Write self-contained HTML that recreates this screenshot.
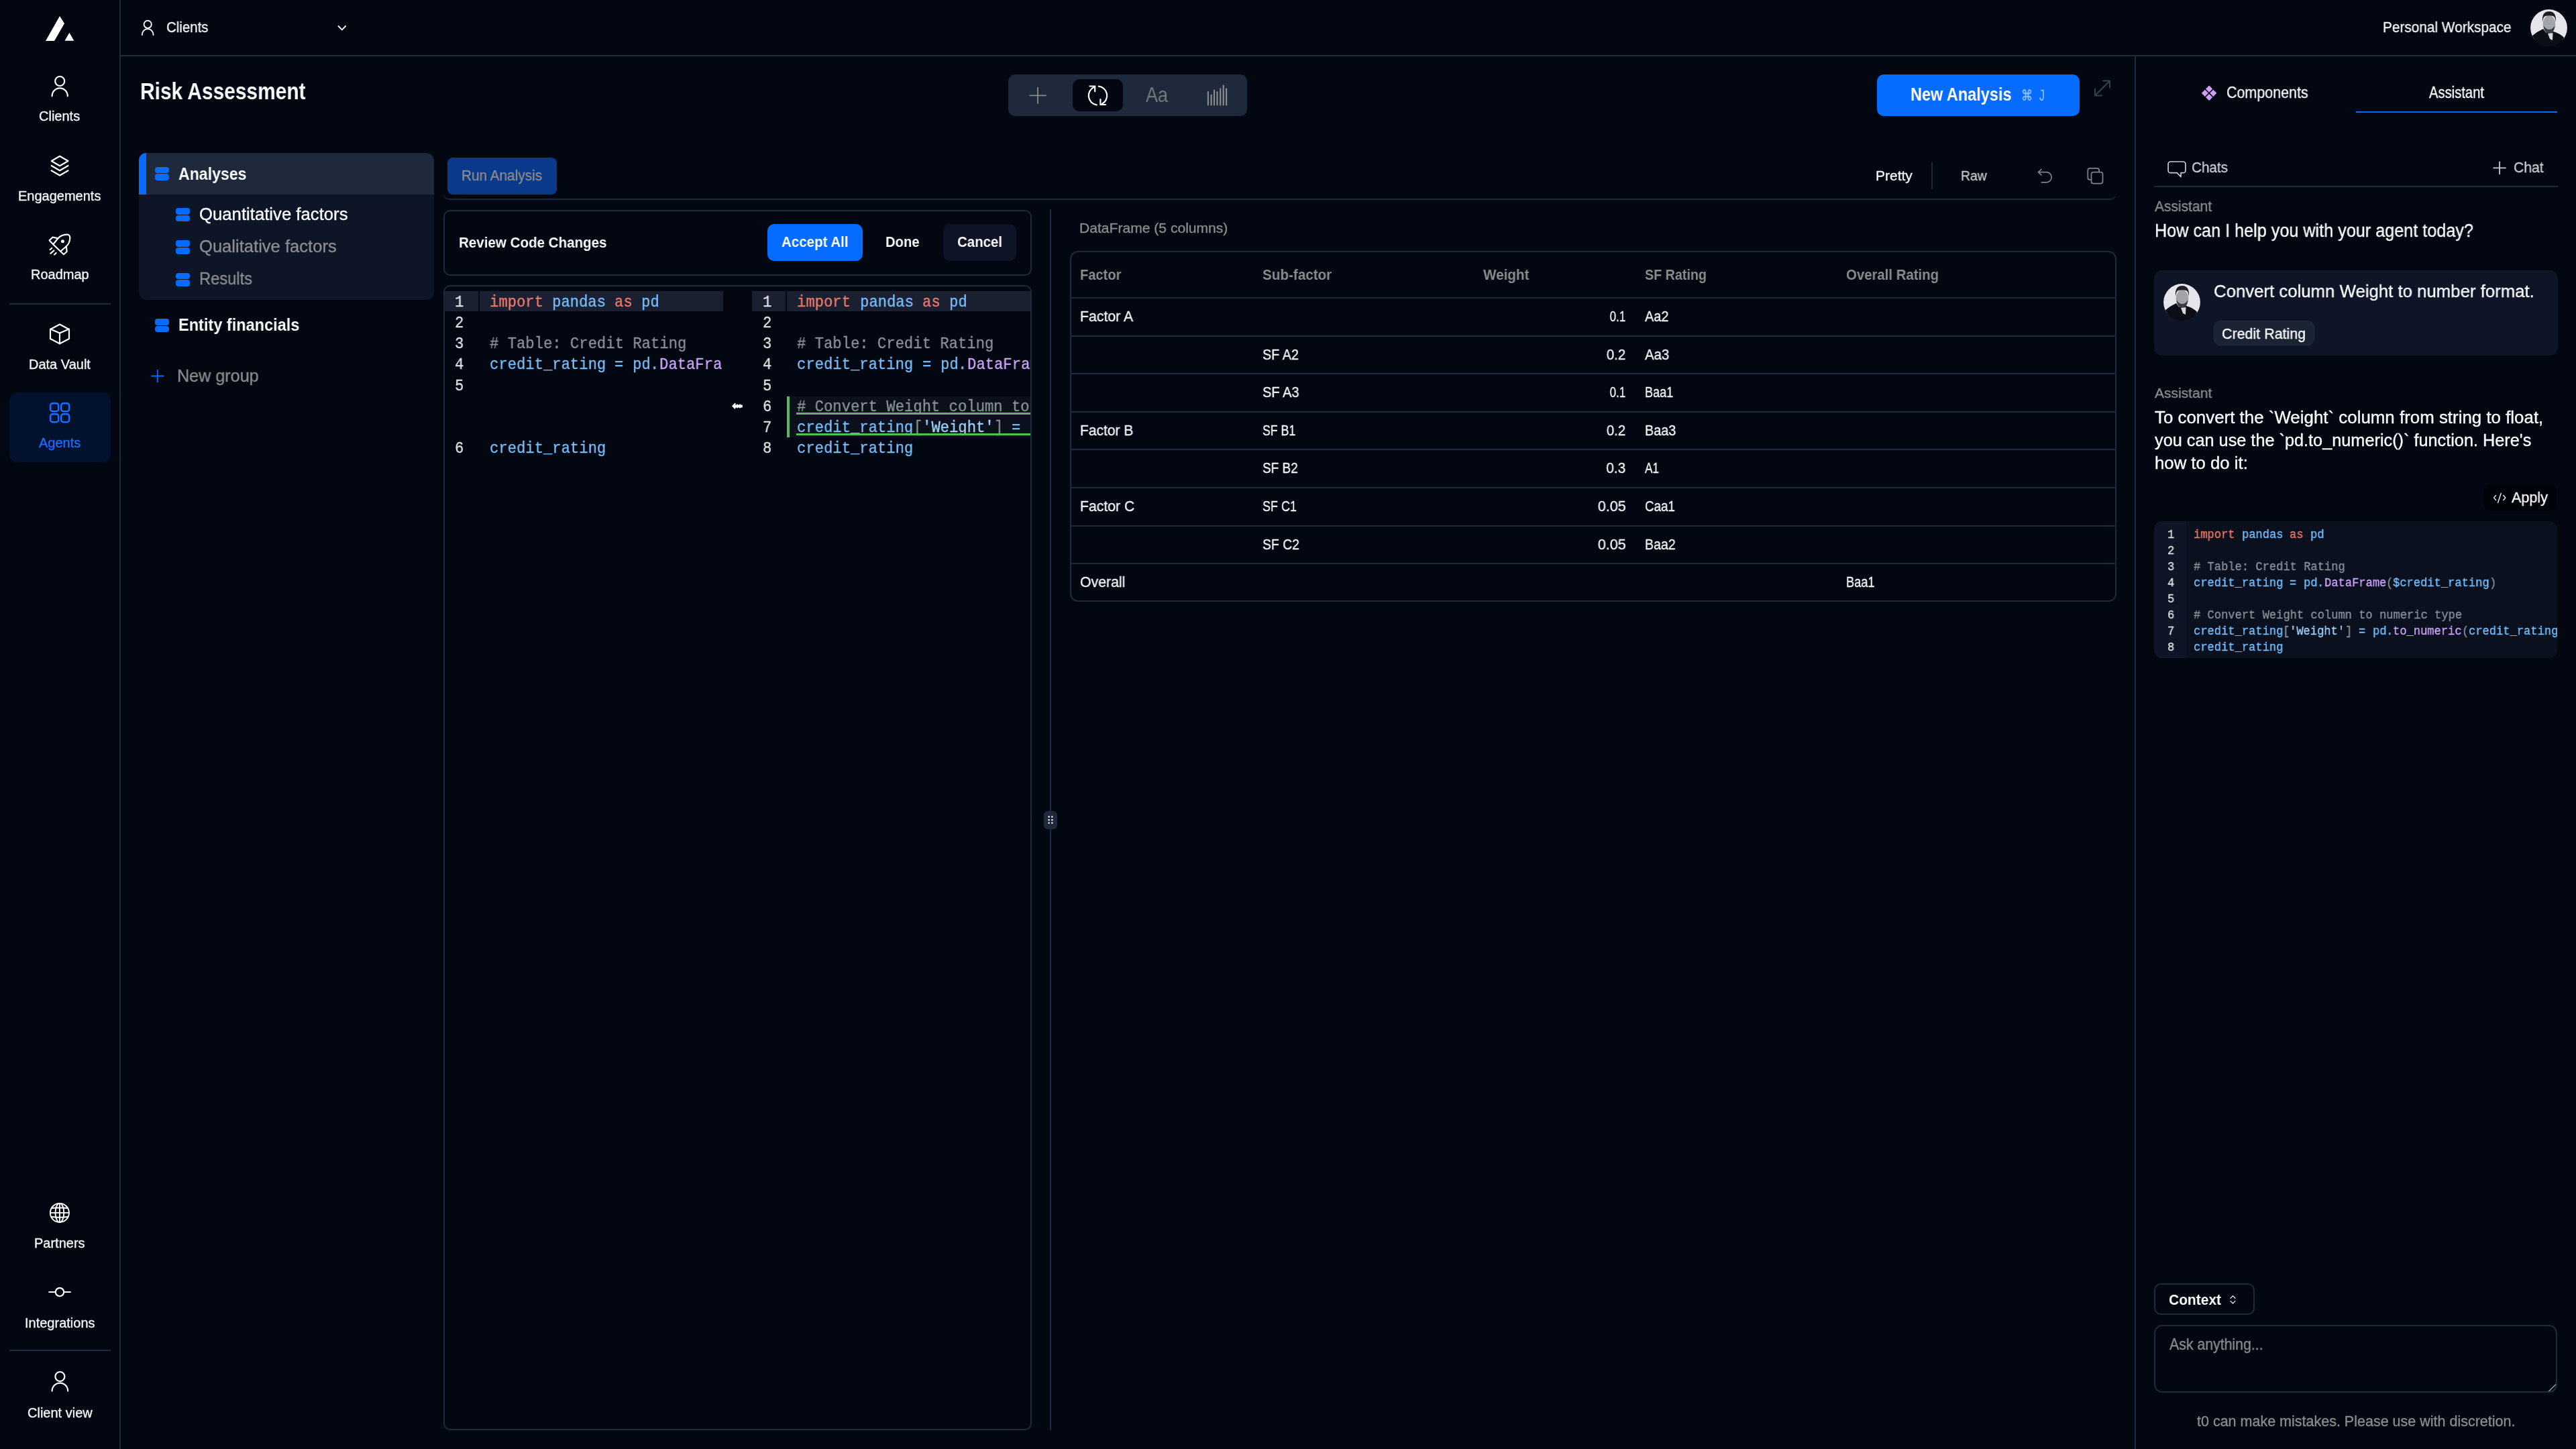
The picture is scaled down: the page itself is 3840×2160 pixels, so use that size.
<!DOCTYPE html>
<html><head><meta charset="utf-8">
<style>
*{box-sizing:border-box;margin:0;padding:0}
html,body{width:3840px;height:2160px;overflow:hidden;background:#030712;font-family:"Liberation Sans",sans-serif;color:#f3f4f6}
.a{position:absolute;white-space:pre;-webkit-font-smoothing:antialiased;will-change:transform}
svg{position:absolute;overflow:visible}
</style></head>
<body>
<div style="position:absolute;left:178px;top:0px;width:2px;height:2160px;background:#1e293b"></div>
<svg style="left:68px;top:24px" width="42" height="37" viewBox="0 0 42 37"><path d="M21 0 L28 11 L13 37 L0 37 Z" fill="#fff"/><path d="M35.4 24.8 L42.3 36.7 L28.5 36.7 Z" fill="#fff"/></svg>
<svg style="left:0;top:0" width="180" height="2160"><g fill="none" stroke="#fff" stroke-width="2.15" stroke-linecap="round" stroke-linejoin="round"><circle cx="89.2" cy="121" r="7"/><path d="M77.6 143.3 A11.6 12 0 0 1 100.8 143.3"/><path d="M89.1 232.8 L101.5 240 L89.1 247.2 L76.7 240 Z"/><path d="M76.7 247 L89.1 254.3 L101.5 247"/><path d="M76.7 254.3 L89.1 261.5 L101.5 254.3"/><path d="M86.5 355.2 C90 351.5 95.5 349.6 101.2 349.7 Q104.4 350.6 104.3 355 C104 360.8 101.6 364.8 98.8 367.2 L90.2 374.8 L79.2 364.2 Z"/><path d="M86.5 355.2 L78.6 353.6 L73.6 358.2 L79.2 364.2"/><path d="M98.8 367.2 L99.7 375 L95 379.2 L90.2 374.8"/><path d="M74.6 372.2 L77.3 369.8"/><path d="M75.4 377.9 L80.3 373.5"/><path d="M81 379.5 L83.6 377.1"/><circle cx="93.4" cy="359.8" r="2.5" fill="#fff" stroke="none"/><path d="M89 483.5 L103 491 L103 505 L89 512.3 L75 505 L75 491 Z"/><path d="M75 490.5 L89 496.5 L103 490.5"/><path d="M89 496.5 L89 512.3"/><g stroke-width="1.9"><circle cx="88.9" cy="1807.9" r="14"/><ellipse cx="88.9" cy="1807.9" rx="6.4" ry="14"/><path d="M88.9 1793.9 V1821.9 M74.9 1807.9 H102.9 M77 1801 Q88.9 1799.5 100.8 1801 M77.5 1814 Q88.9 1815.5 100.3 1814"/></g><circle cx="89" cy="1926" r="6.2"/><path d="M73.2 1926 H82.8"/><path d="M95.2 1926 H104.8"/><circle cx="89.4" cy="2052" r="7"/><path d="M77.6 2073.6 A11.8 12 0 0 1 101.2 2073.6"/></g></svg>
<div style="position:absolute;left:14px;top:451.5px;width:151px;height:2px;background:#1e293b"></div>
<div style="position:absolute;left:14px;top:2012px;width:151px;height:2px;background:#1e293b"></div>
<div style="position:absolute;left:14px;top:585px;width:151px;height:104px;background:#02112d;border-radius:12px;"></div>
<svg style="left:0;top:0" width="180" height="700"><g fill="none" stroke="#1a6dff" stroke-width="2.4"><rect x="75.2" y="601.2" width="12" height="12" rx="3.2"/><rect x="91.2" y="601.2" width="12" height="12" rx="3.2"/><rect x="75.2" y="617.2" width="12" height="12" rx="3.2"/><rect x="91.2" y="617.2" width="12" height="12" rx="3.2"/></g></svg>
<div class="a" style="left:58.43px;top:163.07px;font-size:20.00px;line-height:20.00px;font-weight:400;color:#f3f4f6;-webkit-text-stroke:0.35px #f3f4f6;">Clients</div>
<div class="a" style="left:27.29px;top:282.07px;font-size:20.00px;line-height:20.00px;font-weight:400;color:#f3f4f6;-webkit-text-stroke:0.35px #f3f4f6;">Engagements</div>
<div class="a" style="left:45.64px;top:399.07px;font-size:20.00px;line-height:20.00px;font-weight:400;color:#f3f4f6;-webkit-text-stroke:0.35px #f3f4f6;">Roadmap</div>
<div class="a" style="left:43.05px;top:532.57px;font-size:20.00px;line-height:20.00px;font-weight:400;color:#f3f4f6;-webkit-text-stroke:0.35px #f3f4f6;">Data Vault</div>
<div class="a" style="left:51.20px;top:1843.07px;font-size:20.00px;line-height:20.00px;font-weight:400;color:#f3f4f6;-webkit-text-stroke:0.35px #f3f4f6;">Partners</div>
<div class="a" style="left:36.74px;top:1962.07px;font-size:20.00px;line-height:20.00px;font-weight:400;color:#f3f4f6;-webkit-text-stroke:0.35px #f3f4f6;">Integrations</div>
<div class="a" style="left:40.65px;top:2096.07px;font-size:20.00px;line-height:20.00px;font-weight:400;color:#f3f4f6;-webkit-text-stroke:0.35px #f3f4f6;">Client view</div>
<div class="a" style="left:57.87px;top:650.07px;font-size:20.00px;line-height:20.00px;font-weight:400;color:#1a6dff;-webkit-text-stroke:0.35px #1a6dff;">Agents</div>
<div style="position:absolute;left:180px;top:82px;width:3660px;height:2px;background:#1e293b"></div>
<svg style="left:0;top:0" width="600" height="80"><g fill="none" stroke="#f3f4f6" stroke-width="1.9" stroke-linecap="round"><circle cx="220.2" cy="36.3" r="5.6"/><path d="M211.8 52 A8.4 9 0 0 1 228.6 52"/><path d="M504.5 39 L509.8 44.5 L515.1 39"/></g></svg>
<div class="a" style="left:247.70px;top:30.27px;font-size:22.24px;line-height:22.24px;font-weight:400;color:#f3f4f6;-webkit-text-stroke:0.35px #f3f4f6;transform:scaleX(0.9195);transform-origin:left center;">Clients</div>
<div class="a" style="left:3551.60px;top:29.92px;font-size:22.53px;line-height:22.53px;font-weight:400;color:#f3f4f6;-webkit-text-stroke:0.35px #f3f4f6;transform:scaleX(0.9241);transform-origin:left center;">Personal Workspace</div>
<svg style="left:3771.6px;top:13.5px" width="55" height="55" viewBox="0 0 55 55"><defs><clipPath id="av"><circle cx="27.5" cy="27.5" r="27.4"/></clipPath></defs><linearGradient id="gav" x1="0" y1="0" x2="0" y2="1"><stop offset="0.8" stop-color="#e6e6ea"/><stop offset="0.84" stop-color="#0b0e16"/></linearGradient><g clip-path="url(#av)"><rect width="55" height="55" fill="url(#gav)"/><path d="M0 42 L2 40 Q10 33 19 29 L23 34.5 L34 33 Q42 35 48 40 L53 45 L55 55 L0 55 Z" fill="#0b0e16"/><ellipse cx="28" cy="22" rx="9.3" ry="13" fill="#a3a4aa"/><path d="M19.5 24 Q20 35 28 36 Q36 35 36.5 24 Q33 30 28 30 Q23 30 19.5 24 Z" fill="#3b3d44"/><path d="M18 19 Q16.5 3 28 3 Q39 3 38 19 Q37 11 34 10 Q28 8.5 22 10 Q19 11 18 19 Z" fill="#1d1f26"/><path d="M26 36 L33.5 35 L33 46 L29 44 Z" fill="#d8d8dc"/></g></svg>
<div class="a" style="left:208.50px;top:119.46px;font-size:34.88px;line-height:34.88px;font-weight:700;color:#f9fafb;transform:scaleX(0.8572);transform-origin:left center;">Risk Assessment</div>
<div style="position:absolute;left:1502.5px;top:111.3px;width:356.5px;height:61.7px;background:#1e293b;border-radius:10px;"></div>
<div style="position:absolute;left:1599px;top:118px;width:75px;height:48px;background:#030712;border-radius:10px;"></div>
<svg style="left:0;top:0" width="1900" height="200"><g fill="none" stroke-linecap="round" stroke-linejoin="round"><path d="M1547 130.5 V154 M1535.3 142.3 H1559" stroke="#8b8b8b" stroke-width="1.8"/><path d="M1631 129.8 A14 14 0 0 0 1634.8 156.4" stroke="#fff" stroke-width="2.2"/><path d="M1637.8 128.6 A14 14 0 0 1 1642.9 154.8" stroke="#fff" stroke-width="2.2"/><path d="M1624.5 128.5 H1632.2 V136.3" stroke="#fff" stroke-width="2.2"/><path d="M1640.4 148.2 V156 H1648" stroke="#fff" stroke-width="2.2"/><path d="M1800.9 137 V156.5 M1805.6 141.6 V156.5 M1810 134.7 V156.5 M1814.5 137 V156.5 M1819.2 132.3 V156.5 M1823.7 127.7 V156.5 M1828.1 132.3 V156.5" stroke="#8b8b8b" stroke-width="2.2"/></g></svg>
<div class="a" style="left:1708.00px;top:126.46px;font-size:30.52px;line-height:30.52px;font-weight:400;color:#74777c;-webkit-text-stroke:0.35px #74777c;transform:scaleX(0.8841);transform-origin:left center;-webkit-text-stroke:0;">Aa</div>
<div style="position:absolute;left:2797.5px;top:111.3px;width:302px;height:61.7px;background:#066cff;border-radius:10px;"></div>
<div class="a" style="left:2847.50px;top:128.41px;font-size:27.03px;line-height:27.03px;font-weight:700;color:#ffffff;transform:scaleX(0.8690);transform-origin:left center;">New Analysis</div>
<div class="a" style="left:3013.00px;top:132.37px;font-size:22.00px;line-height:22.00px;font-weight:400;color:#8ec1ff;-webkit-text-stroke:0.35px #8ec1ff;transform:scaleX(0.7727);transform-origin:left center;">⌘</div>
<div class="a" style="left:3038.50px;top:132.39px;font-size:24.29px;line-height:24.29px;font-weight:400;color:#8ec1ff;font-family:'Liberation Mono',monospace;-webkit-text-stroke:0.3px #8ec1ff;transform:scaleX(0.6517);transform-origin:left center;">J</div>
<svg style="left:0;top:0" width="3200" height="200"><g fill="none" stroke="#374151" stroke-width="2" stroke-linecap="round" stroke-linejoin="round"><path d="M3123 142.5 L3145 120.5 M3135 120.5 H3145 V130.5 M3123 132.5 V142.5 H3133"/></g></svg>
<div style="position:absolute;left:207px;top:228px;width:439.5px;height:218.5px;background:#0e1527;border-radius:12px;"></div>
<div style="position:absolute;left:207px;top:228px;width:439.5px;height:61.6px;background:#1e293b;border-radius:12px 12px 0 0;"></div>
<div style="position:absolute;left:207px;top:228px;width:11px;height:61.6px;background:#066cff;border-radius:12px 0 0 0;"></div>
<div style="position:absolute;left:231.2px;top:248.6px;width:21px;height:9.6px;background:#066cff;border-radius:4px"></div><div style="position:absolute;left:231.2px;top:259.4px;width:21px;height:9.6px;background:#066cff;border-radius:4px"></div>
<div class="a" style="left:266.40px;top:245.75px;font-size:26.16px;line-height:26.16px;font-weight:700;color:#f9fafb;transform:scaleX(0.8836);transform-origin:left center;">Analyses</div>
<div style="position:absolute;left:262.1px;top:310px;width:21px;height:9.6px;background:#066cff;border-radius:4px"></div><div style="position:absolute;left:262.1px;top:320.8px;width:21px;height:9.6px;background:#066cff;border-radius:4px"></div>
<div class="a" style="left:297.30px;top:307.34px;font-size:25.58px;line-height:25.58px;font-weight:400;color:#f9fafb;-webkit-text-stroke:0.35px #f9fafb;transform:scaleX(1.0051);transform-origin:left center;">Quantitative factors</div>
<div style="position:absolute;left:262.1px;top:358.4px;width:21px;height:9.6px;background:#066cff;border-radius:4px"></div><div style="position:absolute;left:262.1px;top:369.2px;width:21px;height:9.6px;background:#066cff;border-radius:4px"></div>
<div class="a" style="left:297.30px;top:355.34px;font-size:25.58px;line-height:25.58px;font-weight:400;color:#8c8c8c;-webkit-text-stroke:0.35px #8c8c8c;">Qualitative factors</div>
<div style="position:absolute;left:262.1px;top:406.6px;width:21px;height:9.6px;background:#066cff;border-radius:4px"></div><div style="position:absolute;left:262.1px;top:417.40000000000003px;width:21px;height:9.6px;background:#066cff;border-radius:4px"></div>
<div class="a" style="left:297.30px;top:403.34px;font-size:25.58px;line-height:25.58px;font-weight:400;color:#8c8c8c;-webkit-text-stroke:0.35px #8c8c8c;transform:scaleX(0.9262);transform-origin:left center;">Results</div>
<div style="position:absolute;left:231.2px;top:475px;width:21px;height:9.6px;background:#066cff;border-radius:4px"></div><div style="position:absolute;left:231.2px;top:485.8px;width:21px;height:9.6px;background:#066cff;border-radius:4px"></div>
<div class="a" style="left:266.40px;top:471.82px;font-size:25.73px;line-height:25.73px;font-weight:700;color:#f9fafb;transform:scaleX(0.9146);transform-origin:left center;">Entity financials</div>
<svg style="left:0;top:0" width="300" height="600"><path d="M234.8 551 V570 M225.3 560.5 H244.3" stroke="#066cff" stroke-width="1.8" fill="none"/></svg>
<div class="a" style="left:263.60px;top:547.76px;font-size:25.44px;line-height:25.44px;font-weight:400;color:#8c8c8c;-webkit-text-stroke:0.35px #8c8c8c;transform:scaleX(0.9893);transform-origin:left center;">New group</div>
<div style="position:absolute;left:660px;top:220px;width:2495px;height:77.5px;border:none;border-bottom:2px solid #1e293b;border-radius:0 0 10px 10px;"></div>
<div style="position:absolute;left:667px;top:235px;width:163px;height:54.8px;background:#0a388b;border-radius:8px;"></div>
<div class="a" style="left:688.30px;top:250.92px;font-size:22.53px;line-height:22.53px;font-weight:400;color:#8c8c8c;-webkit-text-stroke:0.35px #8c8c8c;transform:scaleX(0.9219);transform-origin:left center;">Run Analysis</div>
<div class="a" style="left:2796.40px;top:252.47px;font-size:20.35px;line-height:20.35px;font-weight:400;color:#f3f4f6;-webkit-text-stroke:0.35px #f3f4f6;transform:scaleX(1.0312);transform-origin:left center;">Pretty</div>
<div style="position:absolute;left:2879.2px;top:242px;width:2px;height:40px;background:#1e293b"></div>
<div class="a" style="left:2923.00px;top:252.47px;font-size:20.35px;line-height:20.35px;font-weight:400;color:#c4c4c4;-webkit-text-stroke:0.35px #c4c4c4;transform:scaleX(0.9508);transform-origin:left center;">Raw</div>
<svg style="left:0;top:0" width="3200" height="300"><g fill="none" stroke="#80858c" stroke-width="1.7" stroke-linecap="round" stroke-linejoin="round"><path d="M3038.6 256.6 H3050.6 A7.6 7.6 0 0 1 3050.6 271.8 H3043.2"/><path d="M3043 252.4 L3038.6 256.6 L3043 261"/><rect x="3112.3" y="250.9" width="16.8" height="17" rx="3"/><rect x="3117.5" y="256.6" width="17" height="17" rx="3" fill="#030712"/></g></svg>
<div style="position:absolute;left:660.5px;top:312.5px;width:877px;height:98.5px;border:2px solid #1e293b;border-radius:10px;"></div>
<div class="a" style="left:683.50px;top:350.36px;font-size:22.97px;line-height:22.97px;font-weight:700;color:#f9fafb;transform:scaleX(0.8951);transform-origin:left center;">Review Code Changes</div>
<div style="position:absolute;left:1143.5px;top:334.2px;width:142.2px;height:54.6px;background:#066cff;border-radius:10px;"></div>
<div class="a" style="left:1164.60px;top:350.37px;font-size:22.24px;line-height:22.24px;font-weight:700;color:#ffffff;transform:scaleX(0.9221);transform-origin:left center;">Accept All</div>
<div class="a" style="left:1320.40px;top:350.37px;font-size:22.24px;line-height:22.24px;font-weight:700;color:#f9fafb;transform:scaleX(0.9084);transform-origin:left center;">Done</div>
<div style="position:absolute;left:1406px;top:334.2px;width:109px;height:54.6px;background:#0e1426;border-radius:10px;"></div>
<div class="a" style="left:1426.80px;top:350.37px;font-size:22.24px;line-height:22.24px;font-weight:700;color:#f9fafb;transform:scaleX(0.9188);transform-origin:left center;">Cancel</div>
<div style="position:absolute;left:1564.8px;top:312px;width:2px;height:1820px;background:#1e293b"></div>
<div style="position:absolute;left:1556px;top:1208.5px;width:20px;height:27.5px;background:#1e293b;border-radius:6px;"></div>
<svg style="left:0;top:0" width="1600" height="1300"><g fill="#fff"><circle cx="1563.6" cy="1217.6" r="1.25"/><circle cx="1568.3" cy="1217.6" r="1.25"/><circle cx="1563.6" cy="1222.2" r="1.25"/><circle cx="1568.3" cy="1222.2" r="1.25"/><circle cx="1563.6" cy="1226.8" r="1.25"/><circle cx="1568.3" cy="1226.8" r="1.25"/></g></svg>
<div style="position:absolute;left:660.5px;top:425px;width:877px;height:1707px;border:2px solid #1e293b;border-radius:10px;"></div>
<div style="position:absolute;left:662px;top:433.8px;width:51px;height:30.5px;background:#1b2030;"></div>
<div style="position:absolute;left:715px;top:433.8px;width:362.8px;height:30.5px;background:#1b2030;"></div>
<div style="position:absolute;left:1121.2px;top:433.8px;width:50.3px;height:30.5px;background:#1b2030;"></div>
<div style="position:absolute;left:1173.3px;top:433.8px;width:362.7px;height:30.5px;background:#1b2030;"></div>
<div style="position:absolute;left:1177px;top:590.5px;width:359px;height:61.3px;background:#0b101c;"></div>
<div style="position:absolute;left:1173.3px;top:590.5px;width:3.7px;height:61.3px;background:#5cb85c"></div>
<div class="a" style="left:678.00px;top:438.61px;font-size:24.00px;line-height:24.00px;font-weight:400;color:#e2e2e2;font-family:'Liberation Mono',monospace;-webkit-text-stroke:0.3px #e2e2e2;transform:scaleX(0.9253);transform-origin:left center;">1</div>
<div class="a" style="left:678.00px;top:469.86px;font-size:24.00px;line-height:24.00px;font-weight:400;color:#e2e2e2;font-family:'Liberation Mono',monospace;-webkit-text-stroke:0.3px #e2e2e2;transform:scaleX(0.9253);transform-origin:left center;">2</div>
<div class="a" style="left:678.00px;top:501.11px;font-size:24.00px;line-height:24.00px;font-weight:400;color:#e2e2e2;font-family:'Liberation Mono',monospace;-webkit-text-stroke:0.3px #e2e2e2;transform:scaleX(0.9253);transform-origin:left center;">3</div>
<div class="a" style="left:678.00px;top:532.36px;font-size:24.00px;line-height:24.00px;font-weight:400;color:#e2e2e2;font-family:'Liberation Mono',monospace;-webkit-text-stroke:0.3px #e2e2e2;transform:scaleX(0.9253);transform-origin:left center;">4</div>
<div class="a" style="left:678.00px;top:563.61px;font-size:24.00px;line-height:24.00px;font-weight:400;color:#e2e2e2;font-family:'Liberation Mono',monospace;-webkit-text-stroke:0.3px #e2e2e2;transform:scaleX(0.9253);transform-origin:left center;">5</div>
<div class="a" style="left:678.00px;top:657.36px;font-size:24.00px;line-height:24.00px;font-weight:400;color:#e2e2e2;font-family:'Liberation Mono',monospace;-webkit-text-stroke:0.3px #e2e2e2;transform:scaleX(0.9253);transform-origin:left center;">6</div>
<div class="a" style="left:1137.00px;top:438.61px;font-size:24.00px;line-height:24.00px;font-weight:400;color:#e2e2e2;font-family:'Liberation Mono',monospace;-webkit-text-stroke:0.3px #e2e2e2;transform:scaleX(0.9253);transform-origin:left center;">1</div>
<div class="a" style="left:1137.00px;top:469.86px;font-size:24.00px;line-height:24.00px;font-weight:400;color:#e2e2e2;font-family:'Liberation Mono',monospace;-webkit-text-stroke:0.3px #e2e2e2;transform:scaleX(0.9253);transform-origin:left center;">2</div>
<div class="a" style="left:1137.00px;top:501.11px;font-size:24.00px;line-height:24.00px;font-weight:400;color:#e2e2e2;font-family:'Liberation Mono',monospace;-webkit-text-stroke:0.3px #e2e2e2;transform:scaleX(0.9253);transform-origin:left center;">3</div>
<div class="a" style="left:1137.00px;top:532.36px;font-size:24.00px;line-height:24.00px;font-weight:400;color:#e2e2e2;font-family:'Liberation Mono',monospace;-webkit-text-stroke:0.3px #e2e2e2;transform:scaleX(0.9253);transform-origin:left center;">4</div>
<div class="a" style="left:1137.00px;top:563.61px;font-size:24.00px;line-height:24.00px;font-weight:400;color:#e2e2e2;font-family:'Liberation Mono',monospace;-webkit-text-stroke:0.3px #e2e2e2;transform:scaleX(0.9253);transform-origin:left center;">5</div>
<div class="a" style="left:1137.00px;top:594.86px;font-size:24.00px;line-height:24.00px;font-weight:400;color:#e2e2e2;font-family:'Liberation Mono',monospace;-webkit-text-stroke:0.3px #e2e2e2;transform:scaleX(0.9253);transform-origin:left center;">6</div>
<div class="a" style="left:1137.00px;top:626.11px;font-size:24.00px;line-height:24.00px;font-weight:400;color:#e2e2e2;font-family:'Liberation Mono',monospace;-webkit-text-stroke:0.3px #e2e2e2;transform:scaleX(0.9253);transform-origin:left center;">7</div>
<div class="a" style="left:1137.00px;top:657.36px;font-size:24.00px;line-height:24.00px;font-weight:400;color:#e2e2e2;font-family:'Liberation Mono',monospace;-webkit-text-stroke:0.3px #e2e2e2;transform:scaleX(0.9253);transform-origin:left center;">8</div>
<div style="position:absolute;left:715px;top:425px;width:361px;height:300px;overflow:hidden">
<div style="position:absolute;left:-715px;top:-425px;width:3840px;height:2160px">
<div class="a" style="left:729.50px;top:438.61px;font-size:24.00px;line-height:24.00px;font-weight:400;color:#f47b6e;font-family:'Liberation Mono',monospace;-webkit-text-stroke:0.3px #f47b6e;transform:scaleX(0.9255);transform-origin:left center;">import</div>
<div class="a" style="left:822.81px;top:438.61px;font-size:24.00px;line-height:24.00px;font-weight:400;color:#79c0ff;font-family:'Liberation Mono',monospace;-webkit-text-stroke:0.3px #79c0ff;transform:scaleX(0.9255);transform-origin:left center;">pandas</div>
<div class="a" style="left:916.12px;top:438.61px;font-size:24.00px;line-height:24.00px;font-weight:400;color:#f47b6e;font-family:'Liberation Mono',monospace;-webkit-text-stroke:0.3px #f47b6e;transform:scaleX(0.9253);transform-origin:left center;">as</div>
<div class="a" style="left:956.11px;top:438.61px;font-size:24.00px;line-height:24.00px;font-weight:400;color:#79c0ff;font-family:'Liberation Mono',monospace;-webkit-text-stroke:0.3px #79c0ff;transform:scaleX(0.9253);transform-origin:left center;">pd</div>
<div class="a" style="left:729.50px;top:501.11px;font-size:24.00px;line-height:24.00px;font-weight:400;color:#8e949c;font-family:'Liberation Mono',monospace;-webkit-text-stroke:0.3px #8e949c;transform:scaleX(0.9255);transform-origin:left center;"># Table: Credit Rating</div>
<div class="a" style="left:729.50px;top:532.36px;font-size:24.00px;line-height:24.00px;font-weight:400;color:#79c0ff;font-family:'Liberation Mono',monospace;-webkit-text-stroke:0.3px #79c0ff;transform:scaleX(0.9255);transform-origin:left center;">credit_rating</div>
<div class="a" style="left:916.12px;top:532.36px;font-size:24.00px;line-height:24.00px;font-weight:400;color:#79c0ff;font-family:'Liberation Mono',monospace;-webkit-text-stroke:0.3px #79c0ff;transform:scaleX(0.9253);transform-origin:left center;">=</div>
<div class="a" style="left:942.78px;top:532.36px;font-size:24.00px;line-height:24.00px;font-weight:400;color:#79c0ff;font-family:'Liberation Mono',monospace;-webkit-text-stroke:0.3px #79c0ff;transform:scaleX(0.9253);transform-origin:left center;">pd</div>
<div class="a" style="left:969.44px;top:532.36px;font-size:24.00px;line-height:24.00px;font-weight:400;color:#79c0ff;font-family:'Liberation Mono',monospace;-webkit-text-stroke:0.3px #79c0ff;transform:scaleX(0.9253);transform-origin:left center;">.</div>
<div class="a" style="left:982.77px;top:532.36px;font-size:24.00px;line-height:24.00px;font-weight:400;color:#d2a8ff;font-family:'Liberation Mono',monospace;-webkit-text-stroke:0.3px #d2a8ff;transform:scaleX(0.9255);transform-origin:left center;">DataFrame($credit_rating)</div>
<div class="a" style="left:729.50px;top:657.36px;font-size:24.00px;line-height:24.00px;font-weight:400;color:#79c0ff;font-family:'Liberation Mono',monospace;-webkit-text-stroke:0.3px #79c0ff;transform:scaleX(0.9255);transform-origin:left center;">credit_rating</div>
</div></div>
<div style="position:absolute;left:1177px;top:425px;width:359px;height:300px;overflow:hidden">
<div style="position:absolute;left:-1177px;top:-425px;width:3840px;height:2160px">
<div class="a" style="left:1188.30px;top:438.61px;font-size:24.00px;line-height:24.00px;font-weight:400;color:#f47b6e;font-family:'Liberation Mono',monospace;-webkit-text-stroke:0.3px #f47b6e;transform:scaleX(0.9255);transform-origin:left center;">import</div>
<div class="a" style="left:1281.61px;top:438.61px;font-size:24.00px;line-height:24.00px;font-weight:400;color:#79c0ff;font-family:'Liberation Mono',monospace;-webkit-text-stroke:0.3px #79c0ff;transform:scaleX(0.9255);transform-origin:left center;">pandas</div>
<div class="a" style="left:1374.92px;top:438.61px;font-size:24.00px;line-height:24.00px;font-weight:400;color:#f47b6e;font-family:'Liberation Mono',monospace;-webkit-text-stroke:0.3px #f47b6e;transform:scaleX(0.9253);transform-origin:left center;">as</div>
<div class="a" style="left:1414.91px;top:438.61px;font-size:24.00px;line-height:24.00px;font-weight:400;color:#79c0ff;font-family:'Liberation Mono',monospace;-webkit-text-stroke:0.3px #79c0ff;transform:scaleX(0.9253);transform-origin:left center;">pd</div>
<div class="a" style="left:1188.30px;top:501.11px;font-size:24.00px;line-height:24.00px;font-weight:400;color:#8e949c;font-family:'Liberation Mono',monospace;-webkit-text-stroke:0.3px #8e949c;transform:scaleX(0.9255);transform-origin:left center;"># Table: Credit Rating</div>
<div class="a" style="left:1188.30px;top:532.36px;font-size:24.00px;line-height:24.00px;font-weight:400;color:#79c0ff;font-family:'Liberation Mono',monospace;-webkit-text-stroke:0.3px #79c0ff;transform:scaleX(0.9255);transform-origin:left center;">credit_rating</div>
<div class="a" style="left:1374.92px;top:532.36px;font-size:24.00px;line-height:24.00px;font-weight:400;color:#79c0ff;font-family:'Liberation Mono',monospace;-webkit-text-stroke:0.3px #79c0ff;transform:scaleX(0.9253);transform-origin:left center;">=</div>
<div class="a" style="left:1401.58px;top:532.36px;font-size:24.00px;line-height:24.00px;font-weight:400;color:#79c0ff;font-family:'Liberation Mono',monospace;-webkit-text-stroke:0.3px #79c0ff;transform:scaleX(0.9253);transform-origin:left center;">pd</div>
<div class="a" style="left:1428.24px;top:532.36px;font-size:24.00px;line-height:24.00px;font-weight:400;color:#79c0ff;font-family:'Liberation Mono',monospace;-webkit-text-stroke:0.3px #79c0ff;transform:scaleX(0.9253);transform-origin:left center;">.</div>
<div class="a" style="left:1441.57px;top:532.36px;font-size:24.00px;line-height:24.00px;font-weight:400;color:#d2a8ff;font-family:'Liberation Mono',monospace;-webkit-text-stroke:0.3px #d2a8ff;transform:scaleX(0.9255);transform-origin:left center;">DataFrame($credit_rating)</div>
<div class="a" style="left:1188.30px;top:594.86px;font-size:24.00px;line-height:24.00px;font-weight:400;color:#8e949c;font-family:'Liberation Mono',monospace;-webkit-text-stroke:0.3px #8e949c;transform:scaleX(0.9255);transform-origin:left center;"># Convert Weight column to numeric type</div>
<div class="a" style="left:1188.30px;top:626.11px;font-size:24.00px;line-height:24.00px;font-weight:400;color:#79c0ff;font-family:'Liberation Mono',monospace;-webkit-text-stroke:0.3px #79c0ff;transform:scaleX(0.9255);transform-origin:left center;">credit_rating</div>
<div class="a" style="left:1361.59px;top:626.11px;font-size:24.00px;line-height:24.00px;font-weight:400;color:#8e949c;font-family:'Liberation Mono',monospace;-webkit-text-stroke:0.3px #8e949c;transform:scaleX(0.9253);transform-origin:left center;">[</div>
<div class="a" style="left:1374.92px;top:626.11px;font-size:24.00px;line-height:24.00px;font-weight:400;color:#a5d6ff;font-family:'Liberation Mono',monospace;-webkit-text-stroke:0.3px #a5d6ff;transform:scaleX(0.9255);transform-origin:left center;">&#x27;Weight&#x27;</div>
<div class="a" style="left:1481.56px;top:626.11px;font-size:24.00px;line-height:24.00px;font-weight:400;color:#8e949c;font-family:'Liberation Mono',monospace;-webkit-text-stroke:0.3px #8e949c;transform:scaleX(0.9253);transform-origin:left center;">]</div>
<div class="a" style="left:1508.22px;top:626.11px;font-size:24.00px;line-height:24.00px;font-weight:400;color:#79c0ff;font-family:'Liberation Mono',monospace;-webkit-text-stroke:0.3px #79c0ff;transform:scaleX(0.9253);transform-origin:left center;">=</div>
<div class="a" style="left:1534.88px;top:626.11px;font-size:24.00px;line-height:24.00px;font-weight:400;color:#79c0ff;font-family:'Liberation Mono',monospace;-webkit-text-stroke:0.3px #79c0ff;transform:scaleX(0.9253);transform-origin:left center;">pd</div>
<div class="a" style="left:1561.54px;top:626.11px;font-size:24.00px;line-height:24.00px;font-weight:400;color:#79c0ff;font-family:'Liberation Mono',monospace;-webkit-text-stroke:0.3px #79c0ff;transform:scaleX(0.9253);transform-origin:left center;">.</div>
<div class="a" style="left:1574.87px;top:626.11px;font-size:24.00px;line-height:24.00px;font-weight:400;color:#d2a8ff;font-family:'Liberation Mono',monospace;-webkit-text-stroke:0.3px #d2a8ff;transform:scaleX(0.9255);transform-origin:left center;">to_numeric</div>
<div class="a" style="left:1188.30px;top:657.36px;font-size:24.00px;line-height:24.00px;font-weight:400;color:#79c0ff;font-family:'Liberation Mono',monospace;-webkit-text-stroke:0.3px #79c0ff;transform:scaleX(0.9255);transform-origin:left center;">credit_rating</div>
<div style="position:absolute;left:1187px;top:615px;width:360px;height:3px;background:#5cb85c"></div>
<div style="position:absolute;left:1187px;top:646px;width:360px;height:3px;background:#5cb85c"></div>
</div></div>
<svg style="left:0;top:0" width="1200" height="700"><path d="M1091 605.3 L1095.6 600.6 L1097 602 L1095.8 603.4 H1097.8 L1099 601.9 L1100.3 603.4 H1101.8 L1103 601.9 L1104.3 603.4 H1106.8 V607.4 H1104.3 L1103 608.8 L1101.8 607.4 H1100.3 L1099 608.8 L1097.8 607.4 H1096.8 L1095.6 610 Z" fill="#fff"/></svg>
<div class="a" style="left:1608.60px;top:329.36px;font-size:21.08px;line-height:21.08px;font-weight:400;color:#8c8c8c;-webkit-text-stroke:0.35px #8c8c8c;">DataFrame (5 columns)</div>
<div style="position:absolute;left:1594.7px;top:374.3px;width:1560px;height:522.5px;border:2px solid #1e293b;border-radius:12px;"></div>
<div style="position:absolute;left:1596px;top:443px;width:1557px;height:2px;background:#1e293b"></div>
<div style="position:absolute;left:1596px;top:499.6px;width:1557px;height:2px;background:#1e293b"></div>
<div style="position:absolute;left:1596px;top:556.2px;width:1557px;height:2px;background:#1e293b"></div>
<div style="position:absolute;left:1596px;top:612.8px;width:1557px;height:2px;background:#1e293b"></div>
<div style="position:absolute;left:1596px;top:669.4px;width:1557px;height:2px;background:#1e293b"></div>
<div style="position:absolute;left:1596px;top:726px;width:1557px;height:2px;background:#1e293b"></div>
<div style="position:absolute;left:1596px;top:782.6px;width:1557px;height:2px;background:#1e293b"></div>
<div style="position:absolute;left:1596px;top:839.2px;width:1557px;height:2px;background:#1e293b"></div>
<div class="a" style="left:1610.20px;top:399.09px;font-size:22.09px;line-height:22.09px;font-weight:700;color:#8c8c8c;transform:scaleX(0.9084);transform-origin:left center;">Factor</div>
<div class="a" style="left:1882.00px;top:399.09px;font-size:22.09px;line-height:22.09px;font-weight:700;color:#8c8c8c;transform:scaleX(0.9347);transform-origin:left center;">Sub-factor</div>
<div class="a" style="left:2210.50px;top:399.09px;font-size:22.09px;line-height:22.09px;font-weight:700;color:#8c8c8c;transform:scaleX(0.9360);transform-origin:left center;">Weight</div>
<div class="a" style="left:2452.00px;top:399.09px;font-size:22.09px;line-height:22.09px;font-weight:700;color:#8c8c8c;transform:scaleX(0.8929);transform-origin:left center;">SF Rating</div>
<div class="a" style="left:2752.00px;top:399.09px;font-size:22.09px;line-height:22.09px;font-weight:700;color:#8c8c8c;transform:scaleX(0.9219);transform-origin:left center;">Overall Rating</div>
<div class="a" style="left:1610.20px;top:460.92px;font-size:22.53px;line-height:22.53px;font-weight:400;color:#f3f4f6;-webkit-text-stroke:0.35px #f3f4f6;transform:scaleX(0.9446);transform-origin:left center;">Factor A</div>
<div class="a" style="left:2392.39px;top:460.92px;font-size:22.53px;line-height:22.53px;font-weight:400;color:#f3f4f6;-webkit-text-stroke:0.35px #f3f4f6;transform:scaleX(0.7569);transform-origin:right center;">0.1</div>
<div class="a" style="left:2452.00px;top:460.92px;font-size:22.53px;line-height:22.53px;font-weight:400;color:#f3f4f6;-webkit-text-stroke:0.35px #f3f4f6;transform:scaleX(0.8861);transform-origin:left center;">Aa2</div>
<div class="a" style="left:1882.00px;top:517.52px;font-size:22.53px;line-height:22.53px;font-weight:400;color:#f3f4f6;-webkit-text-stroke:0.35px #f3f4f6;transform:scaleX(0.8805);transform-origin:left center;">SF A2</div>
<div class="a" style="left:2392.39px;top:517.52px;font-size:22.53px;line-height:22.53px;font-weight:400;color:#f3f4f6;-webkit-text-stroke:0.35px #f3f4f6;transform:scaleX(0.9102);transform-origin:right center;">0.2</div>
<div class="a" style="left:2452.00px;top:517.52px;font-size:22.53px;line-height:22.53px;font-weight:400;color:#f3f4f6;-webkit-text-stroke:0.35px #f3f4f6;transform:scaleX(0.9061);transform-origin:left center;">Aa3</div>
<div class="a" style="left:1882.00px;top:574.12px;font-size:22.53px;line-height:22.53px;font-weight:400;color:#f3f4f6;-webkit-text-stroke:0.35px #f3f4f6;transform:scaleX(0.8903);transform-origin:left center;">SF A3</div>
<div class="a" style="left:2392.39px;top:574.12px;font-size:22.53px;line-height:22.53px;font-weight:400;color:#f3f4f6;-webkit-text-stroke:0.35px #f3f4f6;transform:scaleX(0.7569);transform-origin:right center;">0.1</div>
<div class="a" style="left:2452.00px;top:574.12px;font-size:22.53px;line-height:22.53px;font-weight:400;color:#f3f4f6;-webkit-text-stroke:0.35px #f3f4f6;transform:scaleX(0.8043);transform-origin:left center;">Baa1</div>
<div class="a" style="left:1610.20px;top:630.72px;font-size:22.53px;line-height:22.53px;font-weight:400;color:#f3f4f6;-webkit-text-stroke:0.35px #f3f4f6;transform:scaleX(0.9343);transform-origin:left center;">Factor B</div>
<div class="a" style="left:1882.00px;top:630.72px;font-size:22.53px;line-height:22.53px;font-weight:400;color:#f3f4f6;-webkit-text-stroke:0.35px #f3f4f6;transform:scaleX(0.7878);transform-origin:left center;">SF B1</div>
<div class="a" style="left:2392.39px;top:630.72px;font-size:22.53px;line-height:22.53px;font-weight:400;color:#f3f4f6;-webkit-text-stroke:0.35px #f3f4f6;transform:scaleX(0.9102);transform-origin:right center;">0.2</div>
<div class="a" style="left:2452.00px;top:630.72px;font-size:22.53px;line-height:22.53px;font-weight:400;color:#f3f4f6;-webkit-text-stroke:0.35px #f3f4f6;transform:scaleX(0.8803);transform-origin:left center;">Baa3</div>
<div class="a" style="left:1882.00px;top:687.32px;font-size:22.53px;line-height:22.53px;font-weight:400;color:#f3f4f6;-webkit-text-stroke:0.35px #f3f4f6;transform:scaleX(0.8437);transform-origin:left center;">SF B2</div>
<div class="a" style="left:2392.39px;top:687.32px;font-size:22.53px;line-height:22.53px;font-weight:400;color:#f3f4f6;-webkit-text-stroke:0.35px #f3f4f6;transform:scaleX(0.9261);transform-origin:right center;">0.3</div>
<div class="a" style="left:2452.00px;top:687.32px;font-size:22.53px;line-height:22.53px;font-weight:400;color:#f3f4f6;-webkit-text-stroke:0.35px #f3f4f6;transform:scaleX(0.7623);transform-origin:left center;">A1</div>
<div class="a" style="left:1610.20px;top:743.92px;font-size:22.53px;line-height:22.53px;font-weight:400;color:#f3f4f6;-webkit-text-stroke:0.35px #f3f4f6;transform:scaleX(0.9418);transform-origin:left center;">Factor C</div>
<div class="a" style="left:1882.00px;top:743.92px;font-size:22.53px;line-height:22.53px;font-weight:400;color:#f3f4f6;-webkit-text-stroke:0.35px #f3f4f6;transform:scaleX(0.7992);transform-origin:left center;">SF C1</div>
<div class="a" style="left:2379.87px;top:743.92px;font-size:22.53px;line-height:22.53px;font-weight:400;color:#f3f4f6;-webkit-text-stroke:0.35px #f3f4f6;transform:scaleX(0.9583);transform-origin:right center;">0.05</div>
<div class="a" style="left:2452.00px;top:743.92px;font-size:22.53px;line-height:22.53px;font-weight:400;color:#f3f4f6;-webkit-text-stroke:0.35px #f3f4f6;transform:scaleX(0.8360);transform-origin:left center;">Caa1</div>
<div class="a" style="left:1882.00px;top:800.52px;font-size:22.53px;line-height:22.53px;font-weight:400;color:#f3f4f6;-webkit-text-stroke:0.35px #f3f4f6;transform:scaleX(0.8619);transform-origin:left center;">SF C2</div>
<div class="a" style="left:2379.87px;top:800.52px;font-size:22.53px;line-height:22.53px;font-weight:400;color:#f3f4f6;-webkit-text-stroke:0.35px #f3f4f6;transform:scaleX(0.9583);transform-origin:right center;">0.05</div>
<div class="a" style="left:2452.00px;top:800.52px;font-size:22.53px;line-height:22.53px;font-weight:400;color:#f3f4f6;-webkit-text-stroke:0.35px #f3f4f6;transform:scaleX(0.8708);transform-origin:left center;">Baa2</div>
<div class="a" style="left:1610.20px;top:857.12px;font-size:22.53px;line-height:22.53px;font-weight:400;color:#f3f4f6;-webkit-text-stroke:0.35px #f3f4f6;transform:scaleX(0.9463);transform-origin:left center;">Overall</div>
<div class="a" style="left:2752.00px;top:857.12px;font-size:22.53px;line-height:22.53px;font-weight:400;color:#f3f4f6;-webkit-text-stroke:0.35px #f3f4f6;transform:scaleX(0.8100);transform-origin:left center;">Baa1</div>
<div style="position:absolute;left:3181.5px;top:84px;width:2px;height:2076px;background:#1e293b"></div>
<svg style="left:0;top:0" width="3840" height="200"><g fill="#d39ef6"><path d="M3293.1 127.5 L3298.2 132.6 L3293.1 137.7 L3288.0 132.6 Z"/><path d="M3286.9 133.70000000000002 L3292.0 138.8 L3286.9 143.9 L3281.8 138.8 Z"/><path d="M3299.3 133.70000000000002 L3304.4 138.8 L3299.3 143.9 L3294.2000000000003 138.8 Z"/><path d="M3293.1 139.9 L3298.2 145 L3293.1 150.1 L3288.0 145 Z"/></g></svg>
<div class="a" style="left:3319.30px;top:127.26px;font-size:23.55px;line-height:23.55px;font-weight:400;color:#f3f4f6;-webkit-text-stroke:0.35px #f3f4f6;transform:scaleX(0.9115);transform-origin:left center;">Components</div>
<div class="a" style="left:3621.00px;top:127.26px;font-size:23.55px;line-height:23.55px;font-weight:400;color:#f9fafb;-webkit-text-stroke:0.35px #f9fafb;transform:scaleX(0.8582);transform-origin:left center;">Assistant</div>
<div style="position:absolute;left:3511.8px;top:165.8px;width:300.6px;height:2.2px;background:#066cff"></div>
<svg style="left:0;top:0" width="3840" height="300"><g fill="none" stroke="#c8cad0" stroke-width="1.7" stroke-linejoin="round" stroke-linecap="round"><path d="M3235.5 241 H3254.5 A3.4 3.4 0 0 1 3257.9 244.4 V254.3 A3.4 3.4 0 0 1 3254.5 257.7 H3251 V263.6 L3245.3 257.7 H3235.5 A3.4 3.4 0 0 1 3232.1 254.3 V244.4 A3.4 3.4 0 0 1 3235.5 241 Z"/><path d="M3726.1 241.5 V259.3 M3717.2 250.4 H3735" stroke-width="1.8"/></g></svg>
<div class="a" style="left:3266.60px;top:239.05px;font-size:22.38px;line-height:22.38px;font-weight:400;color:#c8cad0;-webkit-text-stroke:0.35px #c8cad0;transform:scaleX(0.9238);transform-origin:left center;">Chats</div>
<div class="a" style="left:3746.60px;top:239.05px;font-size:22.38px;line-height:22.38px;font-weight:400;color:#c8cad0;-webkit-text-stroke:0.35px #c8cad0;transform:scaleX(0.9457);transform-origin:left center;">Chat</div>
<div style="position:absolute;left:3211px;top:277.4px;width:601.5px;height:2px;background:#1e293b"></div>
<div class="a" style="left:3211.80px;top:296.54px;font-size:21.80px;line-height:21.80px;font-weight:400;color:#8c8c8c;-webkit-text-stroke:0.35px #8c8c8c;transform:scaleX(0.9611);transform-origin:left center;">Assistant</div>
<div class="a" style="left:3211.80px;top:330.76px;font-size:26.74px;line-height:26.74px;font-weight:400;color:#f9fafb;-webkit-text-stroke:0.35px #f9fafb;transform:scaleX(0.9428);transform-origin:left center;">How can I help you with your agent today?</div>
<div style="position:absolute;left:3211px;top:403.2px;width:601.5px;height:126.9px;background:#0e1527;border-radius:12px;"></div>
<svg style="left:3224.7px;top:423px" width="55" height="55" viewBox="0 0 55 55"><defs><clipPath id="av2"><circle cx="27.5" cy="27.5" r="27.4"/></clipPath></defs><linearGradient id="gav2" x1="0" y1="0" x2="0" y2="1"><stop offset="0.8" stop-color="#e6e6ea"/><stop offset="0.84" stop-color="#0b0e16"/></linearGradient><g clip-path="url(#av2)"><rect width="55" height="55" fill="url(#gav2)"/><path d="M0 42 L2 40 Q10 33 19 29 L23 34.5 L34 33 Q42 35 48 40 L53 45 L55 55 L0 55 Z" fill="#0b0e16"/><ellipse cx="28" cy="22" rx="9.3" ry="13" fill="#a3a4aa"/><path d="M19.5 24 Q20 35 28 36 Q36 35 36.5 24 Q33 30 28 30 Q23 30 19.5 24 Z" fill="#3b3d44"/><path d="M18 19 Q16.5 3 28 3 Q39 3 38 19 Q37 11 34 10 Q28 8.5 22 10 Q19 11 18 19 Z" fill="#1d1f26"/><path d="M26 36 L33.5 35 L33 46 L29 44 Z" fill="#d8d8dc"/></g></svg>
<div class="a" style="left:3300.40px;top:420.55px;font-size:26.16px;line-height:26.16px;font-weight:400;color:#f9fafb;-webkit-text-stroke:0.35px #f9fafb;transform:scaleX(0.9850);transform-origin:left center;">Convert column Weight to number format.</div>
<div style="position:absolute;left:3300.4px;top:478.3px;width:150px;height:37.2px;background:#1b2433;border:1.5px solid #222c3c;border-radius:10px;"></div>
<div class="a" style="left:3312.40px;top:486.54px;font-size:21.80px;line-height:21.80px;font-weight:400;color:#f9fafb;-webkit-text-stroke:0.35px #f9fafb;transform:scaleX(0.9841);transform-origin:left center;">Credit Rating</div>
<div class="a" style="left:3211.60px;top:574.66px;font-size:21.08px;line-height:21.08px;font-weight:400;color:#8c8c8c;-webkit-text-stroke:0.35px #8c8c8c;transform:scaleX(0.9961);transform-origin:left center;">Assistant</div>
<div class="a" style="left:3211.60px;top:609.59px;font-size:25.29px;line-height:25.29px;font-weight:400;color:#f9fafb;-webkit-text-stroke:0.35px #f9fafb;transform:scaleX(1.0239);transform-origin:left center;">To convert the `Weight` column from string to float,</div>
<div class="a" style="left:3211.60px;top:643.79px;font-size:25.29px;line-height:25.29px;font-weight:400;color:#f9fafb;-webkit-text-stroke:0.35px #f9fafb;">you can use the `pd.to_numeric()` function. Here's</div>
<div class="a" style="left:3211.60px;top:678.19px;font-size:25.29px;line-height:25.29px;font-weight:400;color:#f9fafb;-webkit-text-stroke:0.35px #f9fafb;transform:scaleX(1.0181);transform-origin:left center;">how to do it:</div>
<div style="position:absolute;left:3701.8px;top:721.7px;width:109.5px;height:40.5px;background:#01030a;border-radius:10px;"></div>
<svg style="left:0;top:0" width="3840" height="800"><g fill="none" stroke="#e5e7eb" stroke-width="1.5" stroke-linecap="round" stroke-linejoin="round"><path d="M3720.6 738.6 L3717.6 742 L3720.6 745.4 M3731.8 738.6 L3734.8 742 L3731.8 745.4 M3728.2 735.5 L3723.6 749.2"/></g></svg>
<div class="a" style="left:3744.00px;top:730.92px;font-size:22.53px;line-height:22.53px;font-weight:400;color:#f9fafb;-webkit-text-stroke:0.35px #f9fafb;transform:scaleX(0.9587);transform-origin:left center;">Apply</div>
<div style="position:absolute;left:3211px;top:776.6px;width:601px;height:204.7px;background:#0a101e;border-radius:12px;"></div>
<div style="position:absolute;left:3211px;top:776.6px;width:47.7px;height:204.7px;background:#0f1526;border-radius:12px 0 0 12px;"></div>
<div class="a" style="left:3230.80px;top:788.06px;font-size:18.20px;line-height:18.20px;font-weight:400;color:#e2e2e2;font-family:'Liberation Mono',monospace;-webkit-text-stroke:0.3px #e2e2e2;transform:scaleX(0.9394);transform-origin:left center;">1</div>
<div class="a" style="left:3230.80px;top:812.11px;font-size:18.20px;line-height:18.20px;font-weight:400;color:#e2e2e2;font-family:'Liberation Mono',monospace;-webkit-text-stroke:0.3px #e2e2e2;transform:scaleX(0.9394);transform-origin:left center;">2</div>
<div class="a" style="left:3230.80px;top:836.16px;font-size:18.20px;line-height:18.20px;font-weight:400;color:#e2e2e2;font-family:'Liberation Mono',monospace;-webkit-text-stroke:0.3px #e2e2e2;transform:scaleX(0.9394);transform-origin:left center;">3</div>
<div class="a" style="left:3230.80px;top:860.21px;font-size:18.20px;line-height:18.20px;font-weight:400;color:#e2e2e2;font-family:'Liberation Mono',monospace;-webkit-text-stroke:0.3px #e2e2e2;transform:scaleX(0.9394);transform-origin:left center;">4</div>
<div class="a" style="left:3230.80px;top:884.26px;font-size:18.20px;line-height:18.20px;font-weight:400;color:#e2e2e2;font-family:'Liberation Mono',monospace;-webkit-text-stroke:0.3px #e2e2e2;transform:scaleX(0.9394);transform-origin:left center;">5</div>
<div class="a" style="left:3230.80px;top:908.31px;font-size:18.20px;line-height:18.20px;font-weight:400;color:#e2e2e2;font-family:'Liberation Mono',monospace;-webkit-text-stroke:0.3px #e2e2e2;transform:scaleX(0.9394);transform-origin:left center;">6</div>
<div class="a" style="left:3230.80px;top:932.36px;font-size:18.20px;line-height:18.20px;font-weight:400;color:#e2e2e2;font-family:'Liberation Mono',monospace;-webkit-text-stroke:0.3px #e2e2e2;transform:scaleX(0.9394);transform-origin:left center;">7</div>
<div class="a" style="left:3230.80px;top:956.41px;font-size:18.20px;line-height:18.20px;font-weight:400;color:#e2e2e2;font-family:'Liberation Mono',monospace;-webkit-text-stroke:0.3px #e2e2e2;transform:scaleX(0.9394);transform-origin:left center;">8</div>
<div style="position:absolute;left:3260px;top:776.6px;width:551.8px;height:204.7px;overflow:hidden">
<div style="position:absolute;left:-3260px;top:-776.6px;width:3840px;height:2160px">
<div class="a" style="left:3269.80px;top:788.06px;font-size:18.20px;line-height:18.20px;font-weight:400;color:#f47b6e;font-family:'Liberation Mono',monospace;-webkit-text-stroke:0.3px #f47b6e;transform:scaleX(0.9398);transform-origin:left center;">import</div>
<div class="a" style="left:3341.62px;top:788.06px;font-size:18.20px;line-height:18.20px;font-weight:400;color:#79c0ff;font-family:'Liberation Mono',monospace;-webkit-text-stroke:0.3px #79c0ff;transform:scaleX(0.9398);transform-origin:left center;">pandas</div>
<div class="a" style="left:3413.44px;top:788.06px;font-size:18.20px;line-height:18.20px;font-weight:400;color:#f47b6e;font-family:'Liberation Mono',monospace;-webkit-text-stroke:0.3px #f47b6e;transform:scaleX(0.9394);transform-origin:left center;">as</div>
<div class="a" style="left:3444.22px;top:788.06px;font-size:18.20px;line-height:18.20px;font-weight:400;color:#79c0ff;font-family:'Liberation Mono',monospace;-webkit-text-stroke:0.3px #79c0ff;transform:scaleX(0.9394);transform-origin:left center;">pd</div>
<div class="a" style="left:3269.80px;top:836.16px;font-size:18.20px;line-height:18.20px;font-weight:400;color:#8e949c;font-family:'Liberation Mono',monospace;-webkit-text-stroke:0.3px #8e949c;transform:scaleX(0.9400);transform-origin:left center;"># Table: Credit Rating</div>
<div class="a" style="left:3269.80px;top:860.21px;font-size:18.20px;line-height:18.20px;font-weight:400;color:#79c0ff;font-family:'Liberation Mono',monospace;-webkit-text-stroke:0.3px #79c0ff;transform:scaleX(0.9400);transform-origin:left center;">credit_rating</div>
<div class="a" style="left:3413.44px;top:860.21px;font-size:18.20px;line-height:18.20px;font-weight:400;color:#79c0ff;font-family:'Liberation Mono',monospace;-webkit-text-stroke:0.3px #79c0ff;transform:scaleX(0.9394);transform-origin:left center;">=</div>
<div class="a" style="left:3433.96px;top:860.21px;font-size:18.20px;line-height:18.20px;font-weight:400;color:#79c0ff;font-family:'Liberation Mono',monospace;-webkit-text-stroke:0.3px #79c0ff;transform:scaleX(0.9394);transform-origin:left center;">pd</div>
<div class="a" style="left:3454.48px;top:860.21px;font-size:18.20px;line-height:18.20px;font-weight:400;color:#79c0ff;font-family:'Liberation Mono',monospace;-webkit-text-stroke:0.3px #79c0ff;transform:scaleX(0.9394);transform-origin:left center;">.</div>
<div class="a" style="left:3464.74px;top:860.21px;font-size:18.20px;line-height:18.20px;font-weight:400;color:#d2a8ff;font-family:'Liberation Mono',monospace;-webkit-text-stroke:0.3px #d2a8ff;transform:scaleX(0.9400);transform-origin:left center;">DataFrame</div>
<div class="a" style="left:3557.08px;top:860.21px;font-size:18.20px;line-height:18.20px;font-weight:400;color:#8e949c;font-family:'Liberation Mono',monospace;-webkit-text-stroke:0.3px #8e949c;transform:scaleX(0.9394);transform-origin:left center;">(</div>
<div class="a" style="left:3567.34px;top:860.21px;font-size:18.20px;line-height:18.20px;font-weight:400;color:#79c0ff;font-family:'Liberation Mono',monospace;-webkit-text-stroke:0.3px #79c0ff;transform:scaleX(0.9400);transform-origin:left center;">$credit_rating</div>
<div class="a" style="left:3710.98px;top:860.21px;font-size:18.20px;line-height:18.20px;font-weight:400;color:#8e949c;font-family:'Liberation Mono',monospace;-webkit-text-stroke:0.3px #8e949c;transform:scaleX(0.9394);transform-origin:left center;">)</div>
<div class="a" style="left:3269.80px;top:908.31px;font-size:18.20px;line-height:18.20px;font-weight:400;color:#8e949c;font-family:'Liberation Mono',monospace;-webkit-text-stroke:0.3px #8e949c;transform:scaleX(0.9400);transform-origin:left center;"># Convert Weight column to numeric type</div>
<div class="a" style="left:3269.80px;top:932.36px;font-size:18.20px;line-height:18.20px;font-weight:400;color:#79c0ff;font-family:'Liberation Mono',monospace;-webkit-text-stroke:0.3px #79c0ff;transform:scaleX(0.9400);transform-origin:left center;">credit_rating</div>
<div class="a" style="left:3403.18px;top:932.36px;font-size:18.20px;line-height:18.20px;font-weight:400;color:#8e949c;font-family:'Liberation Mono',monospace;-webkit-text-stroke:0.3px #8e949c;transform:scaleX(0.9394);transform-origin:left center;">[</div>
<div class="a" style="left:3413.44px;top:932.36px;font-size:18.20px;line-height:18.20px;font-weight:400;color:#a5d6ff;font-family:'Liberation Mono',monospace;-webkit-text-stroke:0.3px #a5d6ff;transform:scaleX(0.9399);transform-origin:left center;">&#x27;Weight&#x27;</div>
<div class="a" style="left:3495.52px;top:932.36px;font-size:18.20px;line-height:18.20px;font-weight:400;color:#8e949c;font-family:'Liberation Mono',monospace;-webkit-text-stroke:0.3px #8e949c;transform:scaleX(0.9394);transform-origin:left center;">]</div>
<div class="a" style="left:3516.04px;top:932.36px;font-size:18.20px;line-height:18.20px;font-weight:400;color:#79c0ff;font-family:'Liberation Mono',monospace;-webkit-text-stroke:0.3px #79c0ff;transform:scaleX(0.9394);transform-origin:left center;">=</div>
<div class="a" style="left:3536.56px;top:932.36px;font-size:18.20px;line-height:18.20px;font-weight:400;color:#79c0ff;font-family:'Liberation Mono',monospace;-webkit-text-stroke:0.3px #79c0ff;transform:scaleX(0.9394);transform-origin:left center;">pd</div>
<div class="a" style="left:3557.08px;top:932.36px;font-size:18.20px;line-height:18.20px;font-weight:400;color:#79c0ff;font-family:'Liberation Mono',monospace;-webkit-text-stroke:0.3px #79c0ff;transform:scaleX(0.9394);transform-origin:left center;">.</div>
<div class="a" style="left:3567.34px;top:932.36px;font-size:18.20px;line-height:18.20px;font-weight:400;color:#d2a8ff;font-family:'Liberation Mono',monospace;-webkit-text-stroke:0.3px #d2a8ff;transform:scaleX(0.9399);transform-origin:left center;">to_numeric</div>
<div class="a" style="left:3669.94px;top:932.36px;font-size:18.20px;line-height:18.20px;font-weight:400;color:#8e949c;font-family:'Liberation Mono',monospace;-webkit-text-stroke:0.3px #8e949c;transform:scaleX(0.9394);transform-origin:left center;">(</div>
<div class="a" style="left:3680.20px;top:932.36px;font-size:18.20px;line-height:18.20px;font-weight:400;color:#79c0ff;font-family:'Liberation Mono',monospace;-webkit-text-stroke:0.3px #79c0ff;transform:scaleX(0.9400);transform-origin:left center;">credit_rating[&#x27;Weight&#x27;])</div>
<div class="a" style="left:3269.80px;top:956.41px;font-size:18.20px;line-height:18.20px;font-weight:400;color:#79c0ff;font-family:'Liberation Mono',monospace;-webkit-text-stroke:0.3px #79c0ff;transform:scaleX(0.9400);transform-origin:left center;">credit_rating</div>
</div></div>
<div style="position:absolute;left:3211px;top:1913.3px;width:149.5px;height:47.1px;border:2px solid #1e293b;border-radius:10px;"></div>
<div class="a" style="left:3233.30px;top:1926.75px;font-size:22.38px;line-height:22.38px;font-weight:700;color:#ffffff;transform:scaleX(0.9364);transform-origin:left center;">Context</div>
<svg style="left:0;top:0" width="3840" height="2160"><g fill="none" stroke="#e5e7eb" stroke-width="1.5" stroke-linecap="round" stroke-linejoin="round"><path d="M3325 1935.2 L3328.5 1931.6 L3332 1935.2 M3325 1939.4 L3328.5 1943 L3332 1939.4" stroke-width="1.3"/><path d="M3799 2074.5 L3809.5 2064 M3804.5 2074.5 L3809.5 2069.5" stroke="#9ca3af" stroke-width="1.3"/></g></svg>
<div style="position:absolute;left:3211px;top:1975.3px;width:600.6px;height:101.2px;border:2px solid #1e293b;border-radius:12px;"></div>
<div class="a" style="left:3233.80px;top:1993.31px;font-size:23.26px;line-height:23.26px;font-weight:400;color:#8c8c8c;-webkit-text-stroke:0.35px #8c8c8c;transform:scaleX(0.9154);transform-origin:left center;">Ask anything...</div>
<div class="a" style="left:3274.80px;top:2108.99px;font-size:21.51px;line-height:21.51px;font-weight:400;color:#8c8c8c;-webkit-text-stroke:0.35px #8c8c8c;">t0 can make mistakes. Please use with discretion.</div>
</body></html>
